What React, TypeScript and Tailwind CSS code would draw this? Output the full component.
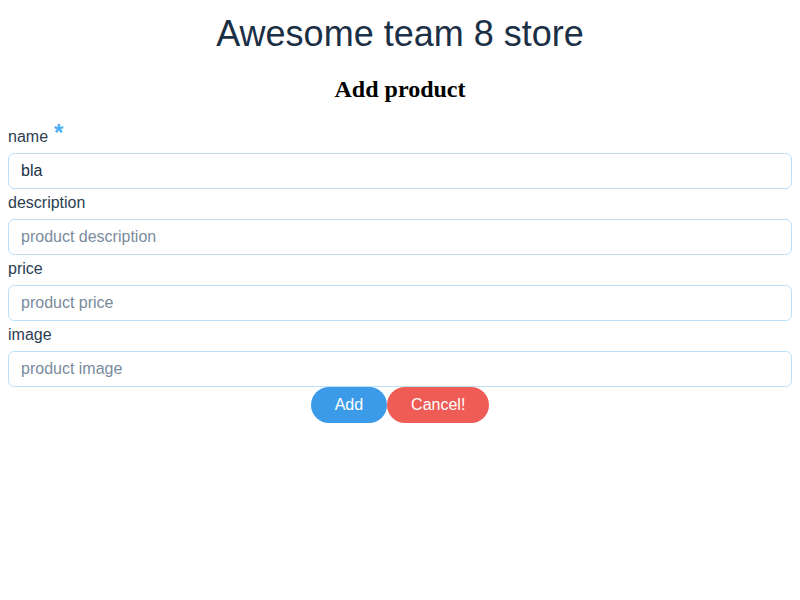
const fields = [
  { label: 'name', placeholder: 'product name', value: 'bla', required: true },
  { label: 'description', placeholder: 'product description', value: '', required: false },
  { label: 'price', placeholder: 'product price', value: '', required: false },
  { label: 'image', placeholder: 'product image', value: '', required: false },
]

export default function App() {
  return (
    <div className="min-h-[600px] bg-white px-2 font-['Liberation_Sans',Arial,sans-serif]">
      {/* Store title */}
      <h1 className="pt-[13px] text-center text-[36px] leading-[41px] text-[#1b2f45]">
        Awesome team 8 store
      </h1>

      <h2 className="mt-[21px] text-center font-['Liberation_Serif','Times_New_Roman',serif] text-[24px] font-bold leading-[28px] text-black">
        Add product
      </h2>

      <form className="mt-[20px] flex flex-col" onSubmit={e => e.preventDefault()}>
        {fields.map(f => (
          <div key={f.label} className="flex flex-col">
            <label className="flex h-[30px] items-center pb-[2px] text-[16px] text-[#2c3e50]">
              {f.label}
              {f.required && (
                <span className="ml-[6px] -mt-[8px] text-[24px] font-bold leading-none text-[#4ab0f5]">*</span>
              )}
            </label>
            <input
              defaultValue={f.value}
              placeholder={f.placeholder}
              className="h-[36px] w-full rounded-[6px] border border-[#bde0f7] bg-white px-3 text-[16px] text-[#1b2f45] placeholder:text-[#7a8b9c] outline-none"
            />
          </div>
        ))}

        <div className="flex justify-center">
          <button
            type="submit"
            className="h-[36px] rounded-full bg-[#3b9be9] px-6 text-[16px] text-white"
          >
            Add
          </button>
          <button
            type="button"
            className="h-[36px] rounded-full bg-[#ee5c55] px-6 text-[16px] text-white"
          >
            Cancel!
          </button>
        </div>
      </form>
    </div>
  )
}
